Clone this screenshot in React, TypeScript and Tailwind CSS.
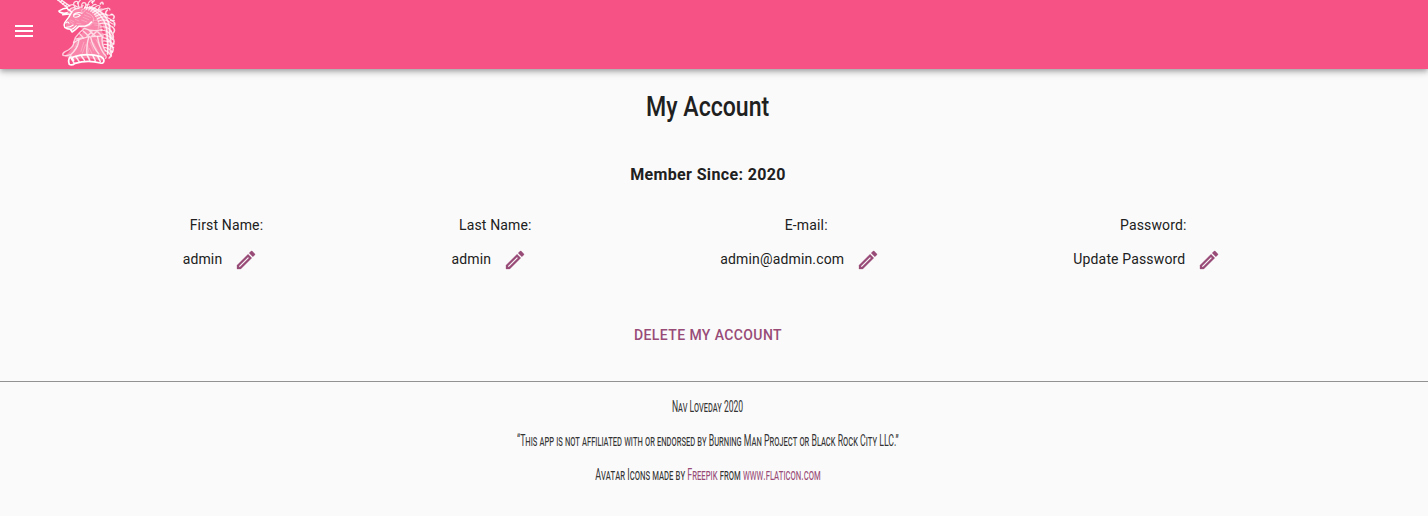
import React from "react";

const fields = [
  { label: "First Name:", value: "admin" },
  { label: "Last Name:", value: "admin" },
  { label: "E-mail:", value: "admin@admin.com" },
  { label: "Password:", value: "Update Password" },
];

function MenuIcon() {
  return (
    <svg viewBox="0 0 24 24" className="h-6 w-6 fill-white">
      <path d="M3 18h18v-2H3v2zm0-5h18v-2H3v2zm0-7v2h18V6H3z" />
    </svg>
  );
}

function PencilIcon() {
  return (
    <svg viewBox="0 0 24 24" className="h-6 w-6 fill-[#984b77] stroke-[#984b77] [stroke-width:0.3]">
      <path d="M14.06 9.02l.92.92L5.92 19H5v-.92l9.06-9.06M17.66 3c-.25 0-.51.1-.7.29l-1.83 1.83 3.75 3.75 1.83-1.83c.39-.39.39-1.02 0-1.41l-2.34-2.34c-.2-.2-.45-.29-.71-.29zm-3.6 3.19L3 17.25V21h3.75L17.81 9.94l-3.75-3.75z" />
    </svg>
  );
}

function UnicornLogo() {
  return (
    <svg viewBox="0 0 216 210" preserveAspectRatio="none" className="h-[70px] w-[76px]" fill="none" stroke="#fff" strokeLinecap="round" strokeLinejoin="round">
      {/* shaded head, neck and base */}
      <path d="M48 30 Q60 22 84 24 Q112 24 130 40 Q148 58 148 90 L152 124 Q154 150 160 166 L146 182 Q108 168 64 180 L42 168 Q62 152 68 128 Q78 112 98 90 L84 82 L62 94 L46 84 L44 70 L56 54Z" fill="#fff" fillOpacity=".3" stroke="none" />
      <path d="M112 20 Q150 24 166 58 Q178 90 176 120 L176 162 L162 166 Q162 110 150 76 Q136 40 100 24Z" fill="#fff" fillOpacity=".35" stroke="none" />
      {/* horn */}
      <path d="M18 -4 L48 22 M24 -6 L56 18" strokeWidth="4" opacity=".85" />
      <path d="M22 0 L28 -1 M29 6 L34 3 M36 12 L41 8 M43 18 L48 14" strokeWidth="4" opacity=".8" />
      {/* face */}
      <path d="M50 24 Q38 24 25 33 M27 36 Q38 42 49 38 M36 44 L54 42 M50 27 L62 36 L53 52 L42 68 Q38 76 42 82 Q48 87 58 88 L63 96 Q72 91 82 79 L101 78 Q113 74 118 66" strokeWidth="4.5" />
      <path d="M45 69 Q51 63 54 70 M47 82 Q58 82 66 75 M58 89 Q66 88 75 77" strokeWidth="3" />
      <path d="M67 47 Q76 38 86 46 Q76 55 67 50 M67 43 Q78 34 91 40" strokeWidth="3" />
      <path d="M58 60 L68 65 M57 65 L66 71 M72 58 L82 63 M76 70 L88 72 M90 60 L105 66 M94 52 L110 59 M98 45 L115 52" strokeWidth="2" opacity=".35" />
      {/* forelock and mane curls */}
      <path d="M47 22 Q62 8 73 18 Q85 27 94 17 M54 31 Q63 19 72 24 M61 37 Q70 24 82 25 M71 22 Q63 9 72 5 Q81 2 78 11 M83 23 Q76 8 86 1 M91 23 Q88 9 96 8 Q104 8 101 15 M98 25 Q104 10 111 14 M104 28 Q109 2 117 2 Q123 2 121 10 M110 30 Q125 9 131 14 M116 34 Q134 14 140 17 Q145 20 138 25 M121 38 Q138 24 151 28 M126 44 Q145 28 162 25 Q171 23 170 30 M130 49 Q148 38 162 44 Q170 48 178 43 M134 57 Q153 44 169 56 Q177 64 183 61 M137 64 Q155 54 171 67 Q178 73 183 72 M140 72 Q158 65 173 78 M142 81 Q162 77 175 94 M145 91 Q164 89 174 108 M148 102 Q166 103 178 119 M150 113 Q165 114 175 129 M151 123 Q167 122 182 132 M154 133 Q165 132 181 143 M155 142 Q165 143 178 156 M157 151 Q168 156 175 168" strokeWidth="3.6" opacity=".8" />
      <path d="M99 22 Q126 24 145 49 Q163 73 162 104 Q166 133 163 162 M112 20 Q137 25 155 47 Q172 68 169 97 Q174 120 172 146 M143 12 Q149 2 151 12 M119 7 L126 2 M163 30 Q153 40 163 48 M174 43 Q187 47 180 56 M172 61 Q188 65 183 78 M176 80 Q188 89 180 99 M173 94 Q183 106 179 117 M176 111 Q187 124 178 135 M174 134 Q184 147 176 158 M172 154 Q178 166 168 174" strokeWidth="4.5" opacity=".8" />
      {/* ear and cheek */}
      <path d="M91 29 L103 24 Q100 36 92 39 Z M104 38 Q126 46 124 62 Q117 82 98 79 M129 46 Q143 63 137 87" strokeWidth="2.5" opacity=".4" />
      {/* collar */}
      <path d="M98 85 Q82 98 72 113 L67 128 Q90 112 119 110 L152 108 M98 85 Q120 96 148 89 M92 91 L112 110 M84 101 L96 115 M111 91 L128 108 M119 95 L105 109 M134 93 L119 108 M134 94 L147 107 M74 117 L93 114" strokeWidth="4" opacity=".7" />
      {/* neck and shoulders */}
      <path d="M68 128 Q65 146 43 155 Q34 160 37 166 Q46 169 58 164 M82 121 Q79 146 58 165 L66 178 M110 113 Q103 133 105 164 M116 113 Q121 140 139 162 M135 110 Q139 140 153 161 Q163 169 158 175 M148 111 Q146 135 158 153" strokeWidth="4" opacity=".7" />
      <path d="M71 142 L77 127 M67 151 L79 139 M88 154 L96 127 M92 160 L101 134 M110 157 L107 134 M124 151 L114 126 M134 150 L123 128 M141 139 L131 119 M119 161 L112 145 M127 75 L145 77 M124 69 L143 70 M122 61 L138 61" strokeWidth="2" opacity=".4" />
      {/* wreath */}
      <path d="M57 171 Q50 181 55 193 Q62 198 71 190 Q108 179 143 189 Q151 192 153 184 Q155 176 145 170 Q105 157 66 171 Q58 177 67 181" strokeWidth="5" />
      <path d="M73 169 L83 185 M88 166 L98 181 M105 164 L113 181 M121 165 L129 183 M135 168 L143 185 M59 173 L69 190" strokeWidth="4.5" opacity=".85" />
    </svg>
  );
}

export default function App() {
  return (
    <div className="min-h-[516px] bg-[#fafafa] font-['Roboto',sans-serif] text-sm text-[#202020]">
      <header className="flex h-[69px] items-start bg-[#f65286] shadow-[0_2px_4px_-1px_rgba(0,0,0,0.2),0_4px_5px_0_rgba(0,0,0,0.14),0_1px_10px_0_rgba(0,0,0,0.12)]">
        <button aria-label="Menu" className="mt-[19px] ml-3">
          <MenuIcon />
        </button>
        <div className="ml-3.5 h-[69px] overflow-hidden">
          <UnicornLogo />
        </div>
      </header>

      <main className="flex h-[312px] w-[1416px] flex-col items-center">
        <h1 className="mt-5 scale-x-[0.825] text-[28px] leading-9 font-medium whitespace-nowrap">My Account</h1>
        <h2 className="mt-[38px] text-base leading-6 font-bold tracking-[0.36px]">Member Since: 2020</h2>
        <section className="mt-7 flex w-full justify-evenly px-[1.5px] tracking-[0.15px]">
          {fields.map((field) => (
            <div key={field.label} className="flex flex-col items-center">
              <p className="leading-5">{field.label}</p>
              <div className="mt-px flex h-12 items-center">
                <span className="pb-0.5">{field.value}</span>
                <button aria-label="Edit" className="p-3">
                  <PencilIcon />
                </button>
              </div>
            </div>
          ))}
        </section>
        <button className="mt-[39px] leading-6 font-medium tracking-[0.4px] text-[#984b77]">DELETE MY ACCOUNT</button>
      </main>

      <footer className="border-t border-[#929292] pt-[13px]">
        <div className="flex w-[1416px] flex-col items-center gap-2.5 text-[16px] leading-6 whitespace-nowrap text-[#333] [font-variant-caps:small-caps]">
          <p className="scale-x-[0.535]">Nav Loveday 2020</p>
          <p className="scale-x-[0.547]">“This app is not affiliated with or endorsed by Burning Man Project or Black Rock City LLC.”</p>
          <p className="scale-x-[0.558]">
            Avatar Icons made by <a className="text-[#984b77]">Freepik</a> from <a className="text-[#984b77]">www.flaticon.com</a>
          </p>
        </div>
      </footer>
    </div>
  );
}
